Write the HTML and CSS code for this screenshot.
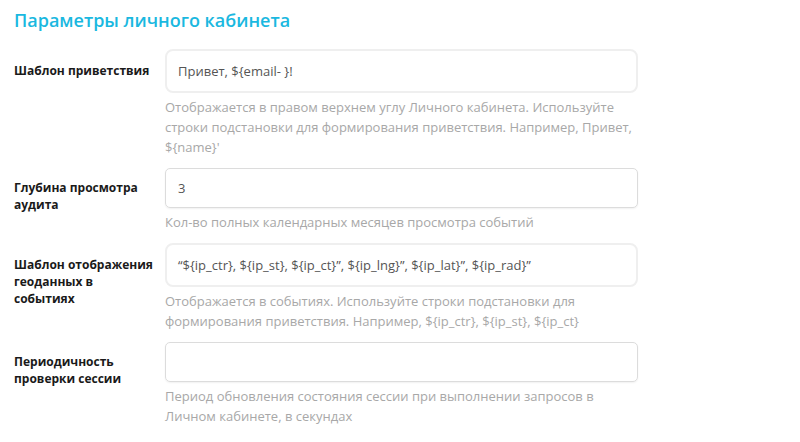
FILE: index.html
```html
<!DOCTYPE html>
<html lang="ru">
<head>
<meta charset="utf-8">
<title>Параметры личного кабинета</title>
<link rel="stylesheet" href="styles.css">
</head>
<body>
<div class="page">
  <h1 class="title">Параметры личного кабинета</h1>
  <div class="form">
    <div class="row">
      <div class="label label-tall">Шаблон приветствия</div>
      <div class="control">
        <div class="input input-tall">Привет, ${email- }!</div>
        <div class="help">Отображается в правом верхнем углу Личного кабинета. Используйте строки подстановки для формирования приветствия. Например, Привет, ${name}'</div>
      </div>
    </div>
    <div class="row">
      <div class="label">Глубина просмотра аудита</div>
      <div class="control">
        <div class="input">3</div>
        <div class="help">Кол-во полных календарных месяцев просмотра событий</div>
      </div>
    </div>
    <div class="row">
      <div class="label label-tall">Шаблон отображения геоданных в событиях</div>
      <div class="control">
        <div class="input input-tall">“${ip_ctr}, ${ip_st}, ${ip_ct}”, ${ip_lng}”, ${ip_lat}”, ${ip_rad}”</div>
        <div class="help">Отображается в событиях. Используйте строки подстановки для формирования приветствия. Например, ${ip_ctr}, ${ip_st}, ${ip_ct}</div>
      </div>
    </div>
    <div class="row">
      <div class="label">Периодичность проверки сессии</div>
      <div class="control">
        <div class="input"></div>
        <div class="help">Период обновления состояния сессии при выполнении запросов в Личном кабинете, в секундах</div>
      </div>
    </div>
  </div>
</div>
</body>
</html>
```
FILE: styles.css
```css
html, body {
  margin: 0;
  padding: 0;
  background: #ffffff;
}
body {
  font-family: "Open Sans", "Noto Sans", sans-serif;
  color: #222;
}
.page {
  padding: 8px 14px 0 14px;
}
.title {
  margin: 0;
  font-size: 18px;
  font-weight: 600;
  line-height: 25px;
  color: #1ab8e0;
}
.form {
  display: flex;
  flex-direction: column;
  gap: 11px;
  margin-top: 16px;
}
.row {
  display: grid;
  grid-template-columns: 151px 473px;
}
.label {
  font-size: 12px;
  font-weight: 700;
  line-height: 17px;
  color: #1a1a1a;
  padding-top: 11px;
  padding-right: 10px;
}
.label-tall {
  padding-top: 13px;
}
.input {
  box-sizing: border-box;
  height: 40px;
  border: 1px solid #dcdcdc;
  border-radius: 5px;
  box-shadow: 0 1px 2px rgba(0,0,0,0.06);
  padding: 0 12px;
  font-size: 13px;
  line-height: 38px;
  color: #555;
  white-space: nowrap;
  overflow: hidden;
}
.input-tall {
  height: 44px;
  line-height: 40px;
  padding: 0 11px;
  border: 2px solid #efefef;
  border-radius: 8px;
  box-shadow: none;
}
.help {
  margin-top: 4px;
  font-size: 13px;
  line-height: 20px;
  color: #a8a8a8;
}
```
